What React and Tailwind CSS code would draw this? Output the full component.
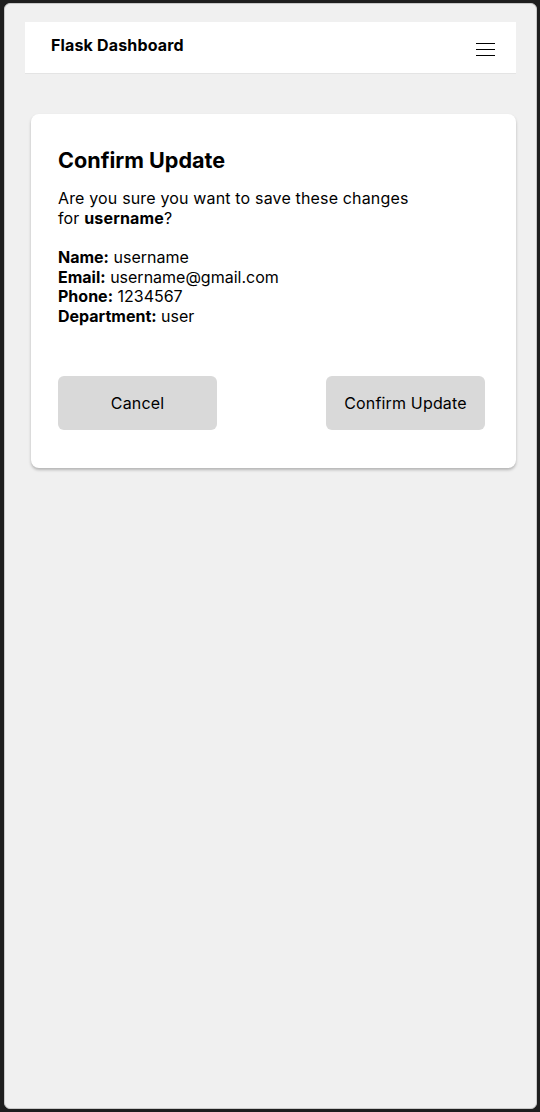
import React from 'react';

const DETAILS = [
  { label: 'Name:', value: 'username' },
  { label: 'Email:', value: 'username@gmail.com' },
  { label: 'Phone:', value: '1234567' },
  { label: 'Department:', value: 'user' },
];

export default function App() {
  return (
    <div className="w-[540px] h-[1112px] bg-[#1e1e1e] pt-[3px] pl-[4px] pr-[3px] pb-[3px] font-['Inter',sans-serif] text-black">
      <div className="h-full bg-[#f0f0f0] rounded-[6px] border border-[#c8c8c8] pt-[18px] px-[20px]">
        {/* Header */}
        <header className="h-[52px] bg-white border-b border-[#e4e4e4] flex items-start justify-between pl-[26px] pr-[21px]">
          <h1 className="text-[16px] font-bold leading-[19px] mt-[14px] tracking-[0.01em]">Flask Dashboard</h1>
          <button className="mt-[21px] flex flex-col gap-[4.8px] w-[19px]">
            <span className="block h-[1.2px] bg-black" />
            <span className="block h-[1.2px] bg-black" />
            <span className="block h-[1.2px] bg-black" />
          </button>
        </header>

        {/* Confirm card */}
        <div className="mt-[40px] ml-[6px] bg-white rounded-[8px] shadow-[0_2px_3px_rgba(0,0,0,0.25)] pt-[33px] pb-[38px] pl-[27px] pr-[31px]">
          <h2 className="text-[21.6px] font-bold leading-[26px]">Confirm Update</h2>
          <p className="mt-[16px] text-[16px] leading-[19.5px] tracking-[0.01em]">
            Are you sure you want to save these changes
            <br />
            for <span className="font-bold">username</span>?
          </p>
          <div className="mt-[20px] text-[16px] leading-[19.5px]">
            {DETAILS.map((d) => (
              <div key={d.label}>
                <span className="font-bold">{d.label}</span> {d.value}
              </div>
            ))}
          </div>
          <div className="mt-[50px] flex justify-between">
            <button className="w-[159px] h-[54px] rounded-[6px] bg-[#d9d9d9] text-[16px] tracking-[0.01em]">Cancel</button>
            <button className="w-[159px] h-[54px] rounded-[6px] bg-[#d9d9d9] text-[16px] tracking-[0.01em]">Confirm Update</button>
          </div>
        </div>
      </div>
    </div>
  );
}
